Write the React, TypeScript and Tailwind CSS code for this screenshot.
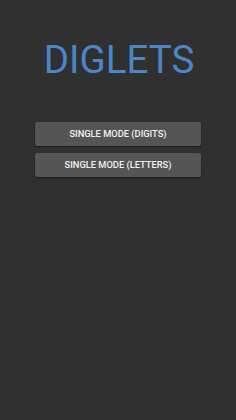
export default function App() {
  return (
    <div
      className="w-[236px] h-[420px] bg-[#303030] flex flex-col items-center"
      style={{ fontFamily: 'Roboto, "Liberation Sans", sans-serif' }}
    >
      <h1 className="mt-[37px] ml-[2px] text-[38.5px] leading-[46px] text-[#4a86c8]">DIGLETS</h1>
      <div className="mt-[39px] flex flex-col gap-[7px]">
        <button className="w-[166px] h-[24px] bg-[#555555] text-[#f2f2f2] text-[9.3px] font-medium rounded-[2px] shadow-[0_1px_2px_rgba(0,0,0,0.5)]">
          SINGLE MODE (DIGITS)
        </button>
        <button className="w-[166px] h-[24px] bg-[#555555] text-[#f2f2f2] text-[9.3px] font-medium rounded-[2px] shadow-[0_1px_2px_rgba(0,0,0,0.5)]">
          SINGLE MODE (LETTERS)
        </button>
      </div>
    </div>
  );
}
